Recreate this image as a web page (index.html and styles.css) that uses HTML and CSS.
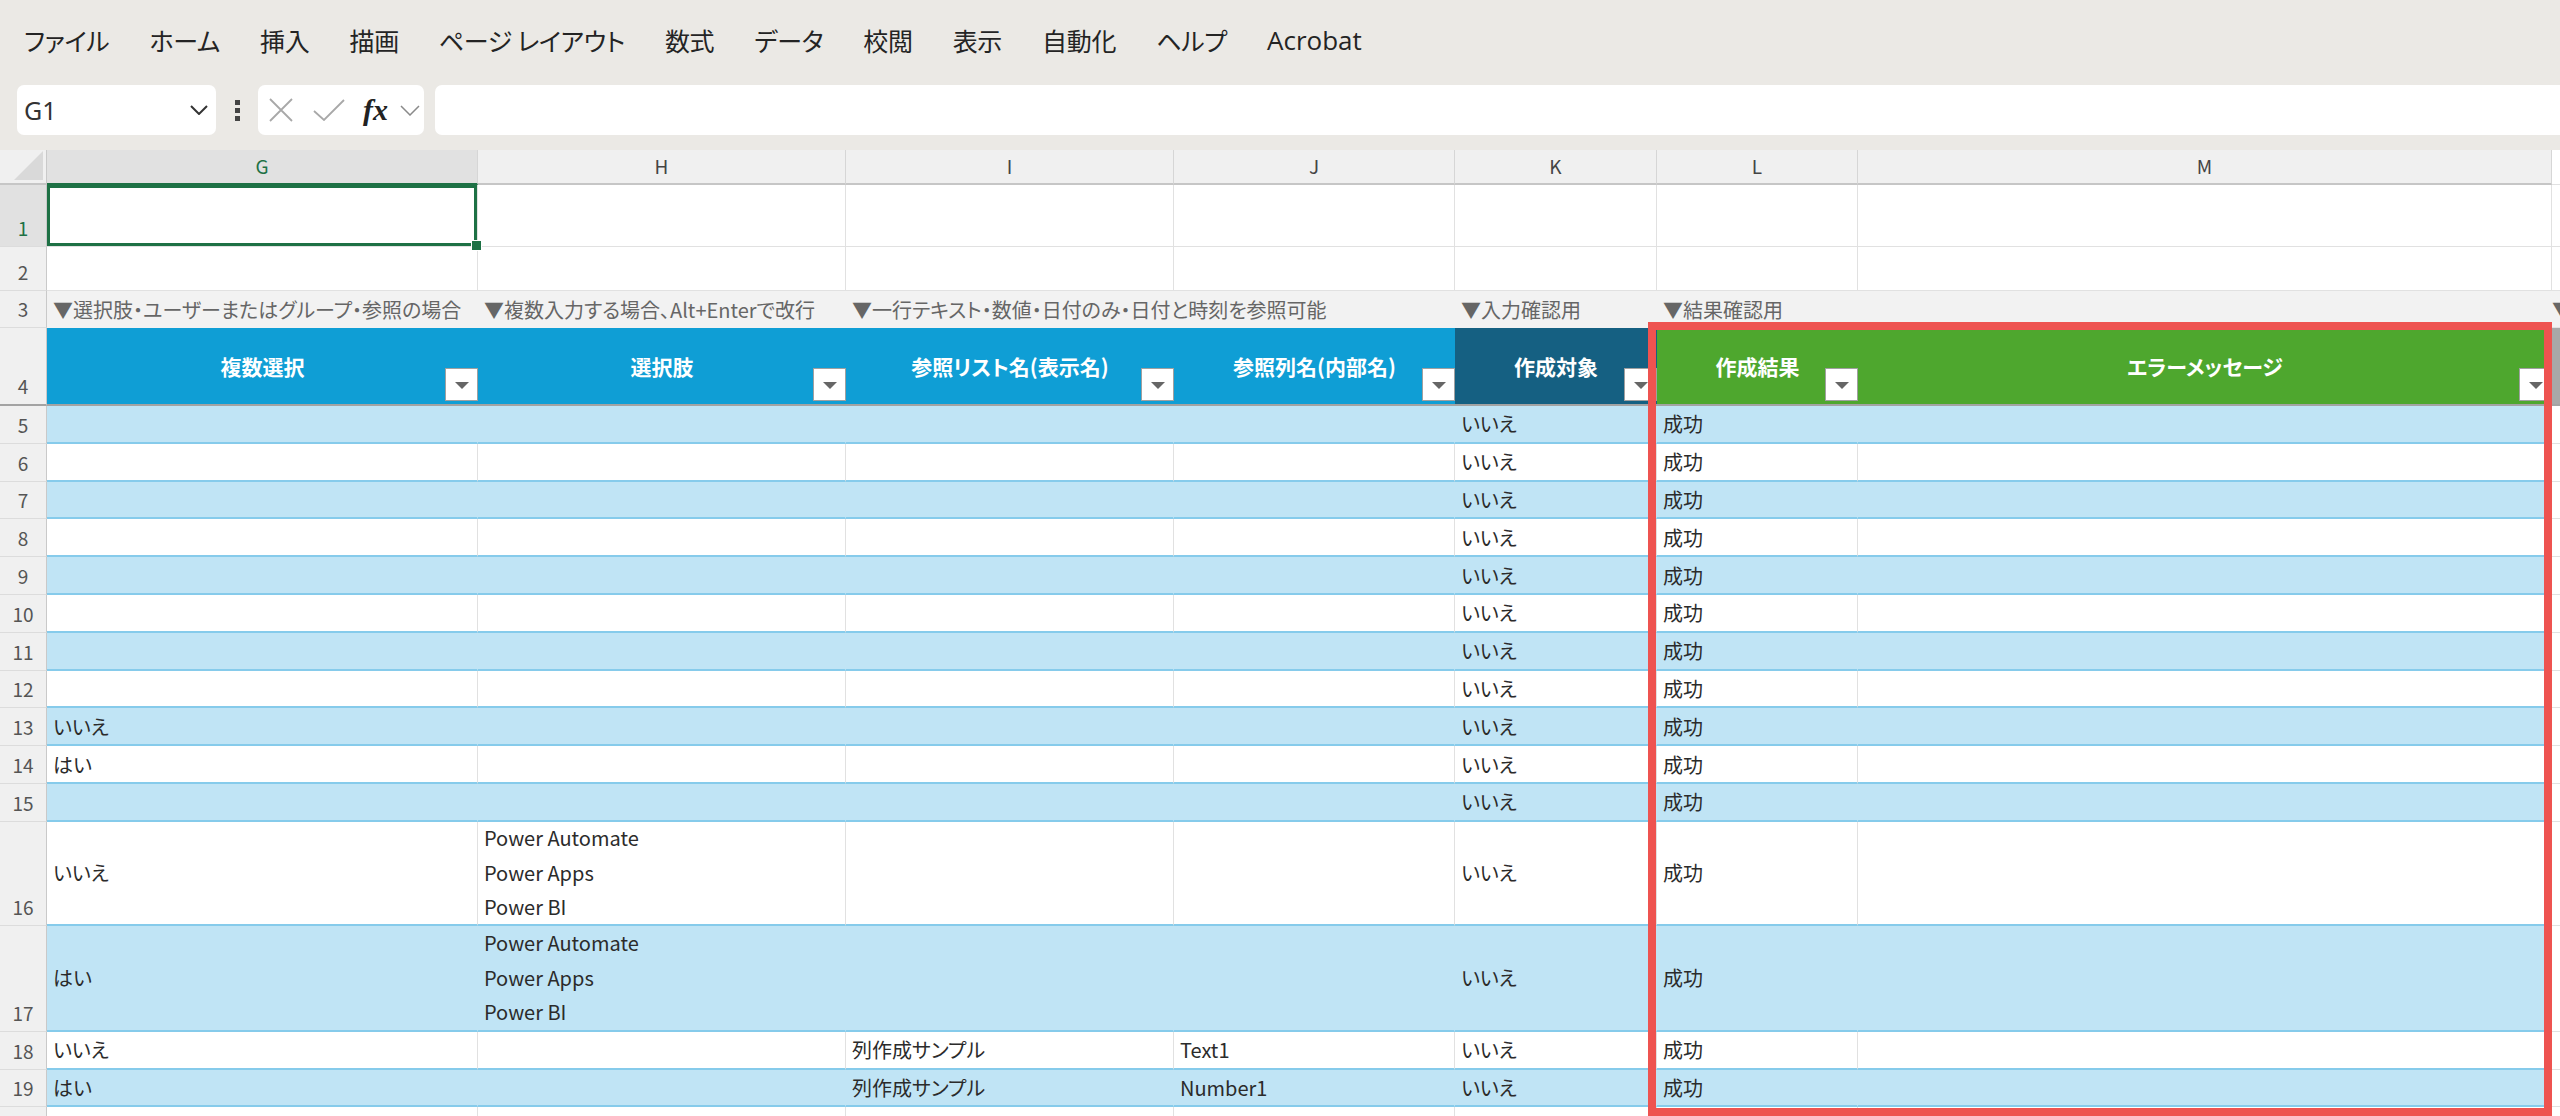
FILE: index.html
```html
<!DOCTYPE html>
<html lang="ja">
<head>
    <meta charset="UTF-8">
    <meta name="viewport" content="width=device-width, initial-scale=1.0">
    <title>列作成 - Excel</title>
    <link rel="stylesheet" href="styles.css">
</head>
<body>
    <div class="menu">
        <span>ファイル</span>
        <span>ホーム</span>
        <span>挿入</span>
        <span>描画</span>
        <span>ページ レイアウト</span>
        <span>数式</span>
        <span>データ</span>
        <span>校閲</span>
        <span>表示</span>
        <span>自動化</span>
        <span>ヘルプ</span>
        <span class="latin">Acrobat</span>
    </div>

    <div class="formula">
        <div class="namebox">
            <span>G1</span>
            <svg width="18" height="10" viewBox="0 0 18 10"><path d="M1 1 L9 9 L17 1" fill="none" stroke="#333" stroke-width="2"/></svg>
        </div>
        <div class="more">
            <svg width="5" height="21" viewBox="0 0 5 21"><rect x="0" y="0" width="5" height="5" fill="#444"/><rect x="0" y="8" width="5" height="5" fill="#444"/><rect x="0" y="16" width="5" height="5" fill="#444"/></svg>
        </div>
        <div class="fxbox">
            <svg class="ico-x" width="24" height="24" viewBox="0 0 24 24"><path d="M1 1 L23 23 M23 1 L1 23" fill="none" stroke="#a8a8a8" stroke-width="1.8"/></svg>
            <svg class="ico-ok" width="32" height="22" viewBox="0 0 32 22"><path d="M1 12 L11 21 L31 1" fill="none" stroke="#a8a8a8" stroke-width="1.8"/></svg>
            <span class="fx">fx</span>
            <svg class="ico-down" width="20" height="11" viewBox="0 0 20 11"><path d="M1 1 L10 10 L19 1" fill="none" stroke="#8a8a8a" stroke-width="1.5"/></svg>
        </div>
        <div class="input"></div>
    </div>

    <div class="sheet">
        <div class="row colhead">
            <div class="corner"></div>
            <div class="c sel">G</div><div class="c">H</div><div class="c">I</div><div class="c">J</div><div class="c">K</div><div class="c">L</div><div class="c">M</div><div class="c n"></div>
        </div>

        <div class="row r1">
            <div class="rn on">1</div>
            <div class="c active"></div><div class="c"></div><div class="c"></div><div class="c"></div><div class="c"></div><div class="c"></div><div class="c"></div><div class="c n"></div>
        </div>

        <div class="row r2">
            <div class="rn">2</div>
            <div class="c"></div><div class="c"></div><div class="c"></div><div class="c"></div><div class="c"></div><div class="c"></div><div class="c"></div><div class="c n"></div>
        </div>

        <div class="row r3">
            <div class="rn">3</div>
            <div class="c">▼選択肢・ユーザーまたはグループ・参照の場合</div>
            <div class="c">▼複数入力する場合、Alt+Enterで改行</div>
            <div class="c">▼一行テキスト・数値・日付のみ・日付と時刻を参照可能</div>
            <div class="c"></div>
            <div class="c">▼入力確認用</div>
            <div class="c">▼結果確認用</div>
            <div class="c"></div>
            <div class="c n">▼</div>
        </div>

        <div class="row r4">
            <div class="rn">4</div>
            <div class="c hd blue">複数選択<span class="fb"></span></div>
            <div class="c hd blue">選択肢<span class="fb"></span></div>
            <div class="c hd blue">参照リスト名(表示名)<span class="fb"></span></div>
            <div class="c hd blue">参照列名(内部名)<span class="fb"></span></div>
            <div class="c hd navy">作成対象<span class="fb"></span></div>
            <div class="c hd green">作成結果<span class="fb"></span></div>
            <div class="c hd green">エラーメッセージ<span class="fb"></span></div>
            <div class="c hd grey"></div>
        </div>

        <div class="row t band">
            <div class="rn">5</div>
            <div class="c"></div><div class="c"></div><div class="c"></div><div class="c"></div><div class="c">いいえ</div><div class="c">成功</div><div class="c"></div><div class="c n"></div>
        </div>
        <div class="row t">
            <div class="rn">6</div>
            <div class="c"></div><div class="c"></div><div class="c"></div><div class="c"></div><div class="c">いいえ</div><div class="c">成功</div><div class="c"></div><div class="c n"></div>
        </div>
        <div class="row t band">
            <div class="rn">7</div>
            <div class="c"></div><div class="c"></div><div class="c"></div><div class="c"></div><div class="c">いいえ</div><div class="c">成功</div><div class="c"></div><div class="c n"></div>
        </div>
        <div class="row t">
            <div class="rn">8</div>
            <div class="c"></div><div class="c"></div><div class="c"></div><div class="c"></div><div class="c">いいえ</div><div class="c">成功</div><div class="c"></div><div class="c n"></div>
        </div>
        <div class="row t band">
            <div class="rn">9</div>
            <div class="c"></div><div class="c"></div><div class="c"></div><div class="c"></div><div class="c">いいえ</div><div class="c">成功</div><div class="c"></div><div class="c n"></div>
        </div>
        <div class="row t">
            <div class="rn">10</div>
            <div class="c"></div><div class="c"></div><div class="c"></div><div class="c"></div><div class="c">いいえ</div><div class="c">成功</div><div class="c"></div><div class="c n"></div>
        </div>
        <div class="row t band">
            <div class="rn">11</div>
            <div class="c"></div><div class="c"></div><div class="c"></div><div class="c"></div><div class="c">いいえ</div><div class="c">成功</div><div class="c"></div><div class="c n"></div>
        </div>
        <div class="row t">
            <div class="rn">12</div>
            <div class="c"></div><div class="c"></div><div class="c"></div><div class="c"></div><div class="c">いいえ</div><div class="c">成功</div><div class="c"></div><div class="c n"></div>
        </div>
        <div class="row t band">
            <div class="rn">13</div>
            <div class="c">いいえ</div><div class="c"></div><div class="c"></div><div class="c"></div><div class="c">いいえ</div><div class="c">成功</div><div class="c"></div><div class="c n"></div>
        </div>
        <div class="row t">
            <div class="rn">14</div>
            <div class="c">はい</div><div class="c"></div><div class="c"></div><div class="c"></div><div class="c">いいえ</div><div class="c">成功</div><div class="c"></div><div class="c n"></div>
        </div>
        <div class="row t band">
            <div class="rn">15</div>
            <div class="c"></div><div class="c"></div><div class="c"></div><div class="c"></div><div class="c">いいえ</div><div class="c">成功</div><div class="c"></div><div class="c n"></div>
        </div>
        <div class="row t tall">
            <div class="rn">16</div>
            <div class="c">いいえ</div>
            <div class="c multi"><span>Power Automate</span><span>Power Apps</span><span>Power BI</span></div>
            <div class="c"></div><div class="c"></div><div class="c">いいえ</div><div class="c">成功</div><div class="c"></div><div class="c n"></div>
        </div>
        <div class="row t band tall2">
            <div class="rn">17</div>
            <div class="c">はい</div>
            <div class="c multi"><span>Power Automate</span><span>Power Apps</span><span>Power BI</span></div>
            <div class="c"></div><div class="c"></div><div class="c">いいえ</div><div class="c">成功</div><div class="c"></div><div class="c n"></div>
        </div>
        <div class="row t">
            <div class="rn">18</div>
            <div class="c">いいえ</div><div class="c"></div><div class="c">列作成サンプル</div><div class="c">Text1</div><div class="c">いいえ</div><div class="c">成功</div><div class="c"></div><div class="c n"></div>
        </div>
        <div class="row t band">
            <div class="rn">19</div>
            <div class="c">はい</div><div class="c"></div><div class="c">列作成サンプル</div><div class="c">Number1</div><div class="c">いいえ</div><div class="c">成功</div><div class="c"></div><div class="c n"></div>
        </div>
        <div class="row r20">
            <div class="rn">20</div>
            <div class="c"></div><div class="c"></div><div class="c"></div><div class="c"></div><div class="c"></div><div class="c"></div><div class="c"></div><div class="c n"></div>
        </div>
    </div>

    <div class="redbox"></div>
</body>
</html>
```

FILE: styles.css
```css
*{
    margin: 0;
    padding: 0;
    box-sizing: border-box;
}
body{
    position: relative;
    width: 2560px;
    height: 1116px;
    overflow: hidden;
    background-color: #ebe9e5;
    font-family: "Noto Sans CJK JP", "Noto Sans", sans-serif;
    font-feature-settings: "palt";
    color: #2b2b2b;
}

/* ribbon tabs */
.menu{
    height: 80px;
    display: flex;
    align-items: center;
    gap: 40px;
    padding-left: 24px;
    font-size: 25px;
    letter-spacing: -0.3px;
    color: #242424;
}
.menu .latin{
    font-family: "Open Sans", sans-serif;
    font-size: 26px;
    letter-spacing: 0;
}

/* name box + formula bar */
.formula{
    height: 50px;
    margin: 5px 0 15px 0;
    display: flex;
}
.namebox{
    width: 199px;
    margin-left: 17px;
    background-color: #fff;
    border-radius: 7px;
    display: flex;
    align-items: center;
    justify-content: space-between;
    padding: 0 8px 0 7px;
    font-family: "Noto Sans", sans-serif;
    font-size: 25px;
    color: #333;
}
.more{
    width: 42px;
    display: flex;
    align-items: center;
    justify-content: center;
}
.fxbox{
    width: 166px;
    background-color: #fff;
    border-radius: 7px;
    display: flex;
    align-items: center;
    padding-left: 11px;
}
.ico-ok{
    margin-left: 20px;
}
.fx{
    margin-left: 18px;
    font-family: "Liberation Serif", serif;
    font-style: italic;
    font-weight: bold;
    font-size: 30px;
    color: #222;
    line-height: 1;
}
.ico-down{
    margin-left: 12px;
}
.input{
    flex: 1;
    margin-left: 11px;
    background-color: #fff;
    border-radius: 7px 0 0 7px;
}

/* grid */
.row{
    display: grid;
    grid-template-columns: 47px 431px 368px 328px 281px 202px 201px 694px 8px;
}
.colhead{ height: 35px; }
.r1{ height: 62px; }
.r2{ height: 44px; }
.r3{ height: 37px; background-color: #f2f2f2; }
.r4{ height: 78px; }
.t{ height: 37.8px; }
.tall{ height: 104px; }
.tall2{ height: 106px; }
.r20{ height: 40px; }

.c{
    display: flex;
    align-items: center;
    padding: 0 6px;
    background-color: #fff;
    border-right: 1px solid #e1e1e1;
    border-bottom: 1px solid #e1e1e1;
    font-size: 20px;
    white-space: nowrap;
    overflow: hidden;
}
.rn{
    display: flex;
    align-items: flex-end;
    justify-content: center;
    padding-bottom: 5px;
    background-color: #f0f0f0;
    border-right: 1px solid #c9c9c9;
    border-bottom: 1px solid #dcdcdc;
    color: #555;
    font-size: 19px;
}
.rn.on{
    background-color: #e1e1e1;
    color: #1e7145;
}

.corner{
    position: relative;
    background-color: #f0f0f0;
    border-right: 1px solid #c9c9c9;
    border-bottom: 2px solid #c6c6c6;
}
.corner::after{
    content: "";
    position: absolute;
    right: 3px;
    bottom: 3px;
    width: 29px;
    height: 29px;
    background-color: #d9d9d9;
    clip-path: polygon(100% 0, 100% 100%, 0 100%);
}
.colhead .c{
    justify-content: center;
    padding-bottom: 3px;
    background-color: #f0f0f0;
    border-right: 1px solid #d6d6d6;
    border-bottom: 2px solid #c6c6c6;
    color: #444;
    font-size: 19px;
}
.colhead .sel{
    background-color: #e1e1e1;
    color: #1e7145;
    border-bottom-color: #1e7145;
}

/* selected cell G1 */
.active{
    position: relative;
    overflow: visible;
    z-index: 2;
    box-shadow: inset 0 0 0 3px #1e7145;
}
.active::after{
    content: "";
    position: absolute;
    right: -5px;
    bottom: -5px;
    width: 9px;
    height: 9px;
    background-color: #1e7145;
    border: 1px solid #fff;
}

/* notes row */
.r3 .c{
    background-color: transparent;
    border: none;
    overflow: visible;
    color: #666;
    font-size: 20px;
}

/* table header */
.hd{
    position: relative;
    justify-content: center;
    border-right: none;
    border-bottom: 2px solid #a3a3a3;
    color: #fff;
    font-weight: bold;
    font-size: 21px;
}
.r4 .rn{
    border-bottom: 2px solid #a3a3a3;
}
.blue{ background-color: #0f9ed5; }
.navy{ background-color: #156082; }
.green{ background-color: #4ea72e; }
.hd.grey{ background-color: #a8a8a8; }
.fb{
    position: absolute;
    right: 0;
    bottom: 3px;
    width: 33px;
    height: 33px;
    background-color: #fff;
    border: 1px solid #a0a0a0;
}
.fb::after{
    content: "";
    position: absolute;
    left: 9px;
    top: 13px;
    border-top: 7px solid #666;
    border-left: 7px solid transparent;
    border-right: 7px solid transparent;
}

/* table body */
.t .c{
    border-bottom: 2px solid #86cbeb;
}
.band .c{
    background-color: #c0e4f5;
    border-right-color: transparent;
}
.row .n{
    background-color: #fff;
    border-right: none;
    border-bottom: 1px solid #e1e1e1;
}
.r3 .n{
    background-color: transparent;
    padding: 0;
    overflow: hidden;
}
.multi{
    flex-direction: column;
    align-items: flex-start;
    justify-content: center;
    line-height: 34.5px;
}

/* annotation */
.redbox{
    position: absolute;
    left: 1648px;
    top: 322px;
    width: 904px;
    height: 794px;
    border: 8px solid #ee5350;
    pointer-events: none;
}
```
